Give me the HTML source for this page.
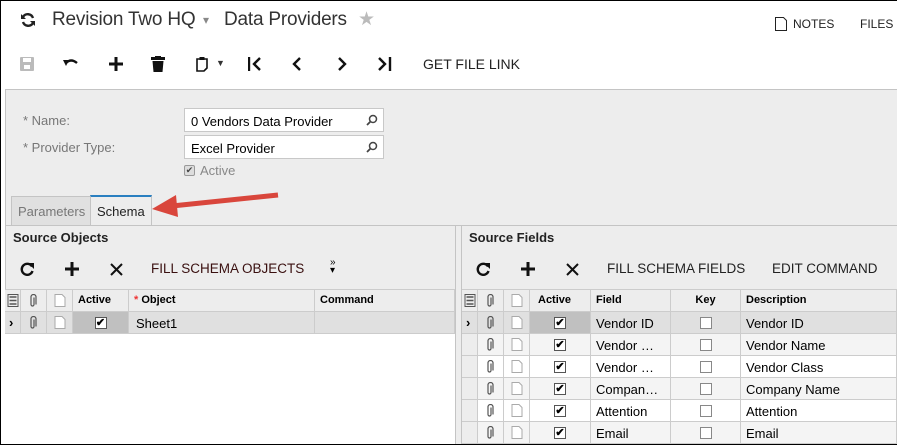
<!DOCTYPE html>
<html><head><style>
*{box-sizing:border-box;margin:0;padding:0}
body{width:897px;height:445px;overflow:hidden;background:#fff;font-family:"Liberation Sans",Arial,sans-serif;position:relative;color:#000}
.a{position:absolute}
.frame{left:0;top:0;width:897px;height:445px;border:1px solid #000;border-right:none;z-index:50;pointer-events:none}
.tb{font-size:15px;color:#222}
.gray{left:5px;top:89px;width:892px;height:356px;background:#ededed;border:1px solid #c4c4c4;border-right:none}
.lbl{font-size:13px;color:#777}
.inp{background:#fff;border:1px solid #c8c8c8;height:24px;font-size:13px;padding:5px 6px;width:199px}
.cell{position:absolute;border-right:1px solid #ccc;border-bottom:1px solid #ccc;font-size:13px;padding:4px 5px;white-space:nowrap;overflow:hidden}
.hd{font-weight:bold;font-size:11px;padding:4px 5px;background:#ededed}
.cb{display:inline-block;width:12px;height:12px;border:1px solid #555;background:#fff;position:absolute;left:50%;top:5px;margin-left:-6px;font-size:11px;line-height:10px;text-align:center;font-weight:bold}
.cbe{border-color:#888}
.cell svg{position:absolute;left:50%;top:4px;transform:translateX(-50%)}
</style></head><body>
<div class="a frame"></div>
<svg class="a" style="left:20px;top:12px" width="16" height="16" viewBox="0 0 16 16"><path d="M13 6A5.5 5.5 0 0 0 3 5M3 10a5.5 5.5 0 0 0 10 1" stroke="#222" stroke-width="2.4" fill="none"/><path d="M1 2v5h5zM15 14V9h-5z" fill="#222"/></svg>
<div class="a" style="left:52px;top:9px;font-size:19px;color:#333;letter-spacing:-0.2px">Revision Two HQ</div>
<div class="a" style="left:203px;top:13px;font-size:12px;color:#888">▾</div>
<div class="a" style="left:224px;top:9px;font-size:19px;color:#333;letter-spacing:-0.2px">Data Providers</div>
<div class="a" style="left:358px;top:8px;font-size:19px;color:#bbb">★</div>
<svg class="a" style="left:775px;top:17px" width="12" height="14"><path d="M.5.5h8l3 3v10H.5z" fill="#fff" stroke="#222"/></svg>
<div class="a" style="left:793px;top:17px;font-size:12px;color:#222">NOTES</div>
<div class="a" style="left:860px;top:17px;font-size:12px;color:#222">FILES</div>
<svg class="a" style="left:20px;top:57px" width="14" height="14"><rect x="0" y="0" width="14" height="14" rx="1" fill="#bbb"/><rect x="3" y="1" width="8" height="4" fill="#fff"/><rect x="4" y="8" width="6" height="4" fill="#fff"/></svg>
<svg class="a" style="left:63px;top:57px" width="16" height="12"><path d="M3 6Q8 1 14 6" stroke="#111" stroke-width="2.4" fill="none"/><path d="M0 3l6 0-3 6z" fill="#111"/></svg>
<svg class="a" style="left:109px;top:57px" width="14" height="14"><path d="M7 0v14M0 7h14" stroke="#111" stroke-width="3"/></svg>
<svg class="a" style="left:151px;top:56px" width="14" height="16"><rect x="0" y="1" width="14" height="3" fill="#111"/><rect x="4" y="0" width="6" height="2" fill="#111"/><path d="M1.5 5h11l-1 11h-9z" fill="#111"/></svg>
<svg class="a" style="left:196px;top:56px" width="12" height="16"><path d="M1 3h10v9l-3 3H1z" fill="#fff" stroke="#111" stroke-width="1.6"/><rect x="3.5" y="1" width="5" height="3" fill="#111"/></svg>
<div class="a" style="left:216px;top:58px;font-size:9px;color:#333">▼</div>
<svg class="a" style="left:248px;top:57px" width="14" height="14"><path d="M1 0v14" stroke="#111" stroke-width="2.4"/><path d="M12 1L6 7l6 6" stroke="#111" stroke-width="2.4" fill="none"/></svg>
<svg class="a" style="left:292px;top:57px" width="10" height="14"><path d="M8 1L2 7l6 6" stroke="#111" stroke-width="2.4" fill="none"/></svg>
<svg class="a" style="left:337px;top:57px" width="10" height="14"><path d="M2 1l6 6-6 6" stroke="#111" stroke-width="2.4" fill="none"/></svg>
<svg class="a" style="left:378px;top:57px" width="14" height="14"><path d="M1 1l6 6-6 6" stroke="#111" stroke-width="2.4" fill="none"/><path d="M12 0v14" stroke="#111" stroke-width="2.4"/></svg>
<div class="a tb" style="left:423px;top:56px;font-size:14px">GET FILE LINK</div>
<div class="a gray"></div>
<div class="a lbl" style="left:23px;top:113px">* Name:</div>
<div class="a lbl" style="left:23px;top:140px">* Provider Type:</div>
<div class="a inp" style="left:184px;top:108px;width:200px">0 Vendors Data Provider</div>
<div class="a inp" style="left:184px;top:135px;width:200px">Excel Provider</div>
<svg class="a" style="left:366px;top:114px" width="12" height="12"><circle cx="7" cy="5" r="3.5" stroke="#444" stroke-width="1.5" fill="none"/><path d="M4.5 7.5L1 11" stroke="#444" stroke-width="1.8"/></svg>
<svg class="a" style="left:366px;top:141px" width="12" height="12"><circle cx="7" cy="5" r="3.5" stroke="#444" stroke-width="1.5" fill="none"/><path d="M4.5 7.5L1 11" stroke="#444" stroke-width="1.8"/></svg>
<div class="a" style="left:184px;top:165px;width:11px;height:11px;border:1px solid #999;background:#ddd;border-radius:2px;font-size:9px;line-height:9px;text-align:center;color:#444">✔</div>
<div class="a lbl" style="left:200px;top:163px;font-size:13px;color:#888">Active</div>
<div class="a" style="left:11px;top:196px;width:80px;height:30px;background:#e0e0e0;border:1px solid #c4c4c4;font-size:13px;color:#777;padding:7px 6px">Parameters</div>
<div class="a" style="left:90px;top:195px;width:62px;height:31px;background:#ededed;border:1px solid #c4c4c4;border-top:2px solid #2a7fc0;border-bottom:none;font-size:13px;color:#222;padding:7px 6px">Schema</div>
<svg class="a" style="left:150px;top:190px" width="132" height="32"><path d="M128 5L22 16" stroke="#d9463c" stroke-width="5"/><path d="M2 19L26 5l2 22z" fill="#d9463c"/></svg>
<div class="a" style="left:5px;top:225px;width:892px;height:1px;background:#c4c4c4"></div>
<div class="a" style="left:455px;top:226px;width:1px;height:219px;background:#c4c4c4"></div>
<div class="a" style="left:461px;top:226px;width:1px;height:219px;background:#c4c4c4"></div>
<div class="a" style="left:13px;top:230px;font-size:13px;font-weight:bold;color:#222">Source Objects</div>
<svg class="a" style="left:20px;top:262px" width="14" height="14"><path d="M12 4.5A5.5 5.5 0 1 0 12.5 9" stroke="#111" stroke-width="2.4" fill="none"/><path d="M8 1h6v6z" fill="#111"/></svg>
<svg class="a" style="left:65px;top:262px" width="14" height="14"><path d="M7 0v14M0 7h14" stroke="#111" stroke-width="3"/></svg>
<svg class="a" style="left:110px;top:263px" width="13" height="13"><path d="M1 1l11 11M12 1L1 12" stroke="#111" stroke-width="2"/></svg>
<div class="a tb" style="left:151px;top:261px;font-size:13.5px;color:#3a1010">FILL SCHEMA OBJECTS</div>
<div class="a" style="left:330px;top:259px;font-size:10px;line-height:8px">»<br>▾</div>
<div class="a" style="left:5px;top:289px;width:450px;height:156px;background:#fff;border-top:1px solid #ccc"></div>
<div class="a" style="left:469px;top:230px;font-size:13px;font-weight:bold;color:#222">Source Fields</div>
<svg class="a" style="left:476px;top:262px" width="14" height="14"><path d="M12 4.5A5.5 5.5 0 1 0 12.5 9" stroke="#111" stroke-width="2.4" fill="none"/><path d="M8 1h6v6z" fill="#111"/></svg>
<svg class="a" style="left:521px;top:262px" width="14" height="14"><path d="M7 0v14M0 7h14" stroke="#111" stroke-width="3"/></svg>
<svg class="a" style="left:566px;top:263px" width="13" height="13"><path d="M1 1l11 11M12 1L1 12" stroke="#111" stroke-width="2"/></svg>
<div class="a tb" style="left:607px;top:261px;font-size:13.5px">FILL SCHEMA FIELDS</div>
<div class="a tb" style="left:772px;top:261px;font-size:13.5px">EDIT COMMAND</div>
<div class="a" style="left:462px;top:289px;width:435px;height:156px;background:#fff;border-top:1px solid #ccc"></div>
<div id="g"></div>
<script>
var clip='<svg width="8" height="13"><path d="M5.5 3v7a1.5 1.5 0 0 1-3 0V2.5a2.5 2.5 0 0 1 5 0V10" stroke="#555" stroke-width="1.2" fill="none" transform="translate(-1.5,0.5)"/></svg>';
var doc='<svg width="11" height="13"><path d="M.5.5h7l3 3v9H.5z" fill="#fff" stroke="#aaa"/></svg>';
var lst='<svg width="11" height="13"><rect x=".5" y=".5" width="10" height="12" fill="none" stroke="#555"/><path d="M2 3h7M2 6.5h7M2 10h7" stroke="#555" stroke-width="1.5"/></svg>';
function c(l,t,w,bg,cont,cls,st){return '<div class="cell '+(cls||'')+'" style="left:'+l+'px;top:'+t+'px;width:'+w+'px;height:22px;background:'+bg+';'+(st||'')+'">'+cont+'</div>';}
var h="";
h+=c(5,290,16,"#ededed",lst,"hd")+c(21,290,26,"#ededed",clip,"hd")+c(47,290,26,"#ededed",doc,"hd")+c(73,290,56,"#ededed","Active","hd")+c(129,290,186,"#ededed",'<span style="color:#e33">*</span> Object',"hd")+c(315,290,140,"#ededed","Command","hd");
h+=c(5,312,16,"#e0e0e0","›","", "font-weight:bold;padding:3px 4px")+c(21,312,26,"#e0e0e0",clip)+c(47,312,26,"#e0e0e0",doc)+c(73,312,56,"#c0c0c0",'<span class="cb">✔</span>')+c(129,312,186,"#e0e0e0","Sheet1","","padding-left:7px")+c(315,312,140,"#e0e0e0","");
h+=c(462,290,16,"#ededed",lst,"hd")+c(478,290,26,"#ededed",clip,"hd")+c(504,290,26,"#ededed",doc,"hd")+c(530,290,61,"#ededed","Active","hd","padding-left:8px")+c(591,290,80,"#ededed","Field","hd")+c(671,290,70,"#ededed","Key","hd","text-align:center")+c(741,290,156,"#ededed","Description","hd");
var d=[["Vendor ID","Vendor ID"],["Vendor …","Vendor Name"],["Vendor …","Vendor Class"],["Compan…","Company Name"],["Attention","Attention"],["Email","Email"]];
d.forEach(function(r,i){var t=312+i*22,bg=i==0?"#e0e0e0":(i%2?"#f4f4f4":"#fff"),lb=i==0?"#e0e0e0":"#ededed";
h+=c(462,t,16,lb,i==0?"›":"","","font-weight:bold;padding:3px 4px")+c(478,t,26,bg,clip)+c(504,t,26,bg,doc)+c(530,t,61,i==0?"#c0c0c0":bg,'<span class="cb">✔</span>')+c(591,t,80,bg,r[0])+c(671,t,70,bg,'<span class="cb cbe"></span>')+c(741,t,156,bg,r[1]);});
document.getElementById("g").innerHTML=h;
</script>
</body></html>
